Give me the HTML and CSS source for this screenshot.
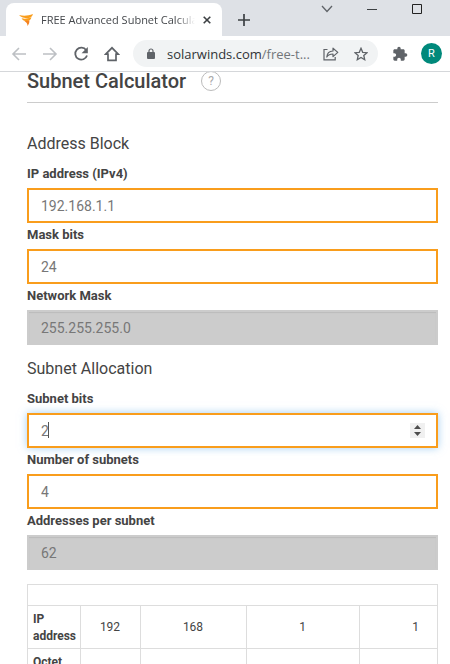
FILE: index.html
```html
<!DOCTYPE html>
<html lang="en">

<head>
  <meta charset="UTF-8">
  <meta name="viewport" content="width=device-width, initial-scale=1.0">
  <title>FREE Advanced Subnet Calculator</title>
  <link rel="stylesheet" href="styles.css">
</head>

<body>

  <header class="browser">
    <div class="tabs">
      <div class="tab">
        <svg class="tab__logo" viewBox="0 0 14 12">
          <path d="M0 1C4 2 9 2 14 0c-.7 2.600-2.600 3.900-5 4.200C6 4.300 2 3.500 0 1z" fill="#f99d1c" />
          <path d="M2.500 4.200c3 .9 6.500.4 10-1-.6 2.300-2 3.500-4.500 3.900-2.200.1-4.500-.9-5.500-2.900z" fill="#f99d1c" />
          <path d="M5.200 6.800c1.600.5 3.400.3 5-.5.5 2-.2 4-1.700 5.700.2-2.200-1.200-3.700-3.300-5.200z" fill="#f58220" />
        </svg>
        <span class="tab__title">FREE Advanced Subnet Calculator</span>
        <button class="tab__close" type="button" aria-label="Close tab">
          <svg width="8" height="8" viewBox="0 0 8 8">
            <path d="M.7.7l6.600 6.600M7.300.7L.7 7.300" stroke="#3c4043" stroke-width="1.600" />
          </svg>
        </button>
      </div>
      <button class="tabs__new" type="button" aria-label="New tab">
        <svg width="12" height="12" viewBox="0 0 12 12">
          <path d="M6 0v12M0 6h12" stroke="#3c4043" stroke-width="1.700" />
        </svg>
      </button>
      <div class="window">
        <button type="button" aria-label="Search tabs">
          <svg width="12" height="12" viewBox="0 0 12 12">
            <path d="M1 3l5 5.500L11 3" fill="none" stroke="#5f6368" stroke-width="1.300" />
          </svg>
        </button>
        <button type="button" aria-label="Minimize">
          <svg width="12" height="12" viewBox="0 0 12 12">
            <path d="M1 6.500h10" stroke="#3c4043" />
          </svg>
        </button>
        <button type="button" aria-label="Maximize">
          <svg width="12" height="12" viewBox="0 0 12 12">
            <path d="M1.500 1.500h9v9h-9z" fill="none" stroke="#222" />
          </svg>
        </button>
      </div>
    </div>

    <nav class="toolbar">
      <button type="button" aria-label="Back">
        <svg width="16" height="16" viewBox="0 0 16 16">
          <path d="M15 8H2M8 2L2 8l6 6" fill="none" stroke="#bdc0c4" stroke-width="1.600" />
        </svg>
      </button>
      <button type="button" aria-label="Forward">
        <svg width="16" height="16" viewBox="0 0 16 16">
          <path d="M1 8h13M8 2l6 6-6 6" fill="none" stroke="#bdc0c4" stroke-width="1.600" />
        </svg>
      </button>
      <button type="button" aria-label="Reload">
        <svg width="16" height="16" viewBox="0 0 16 16">
          <path d="M13.200 4.200A6 6 0 1 0 14 9.500" fill="none" stroke="#5f6368" stroke-width="1.800" />
          <path d="M14.800 1v6.200H8.600z" fill="#5f6368" />
        </svg>
      </button>
      <button type="button" aria-label="Home">
        <svg width="16" height="16" viewBox="0 0 16 16">
          <path d="M1.700 8.200L8 1.800l6.300 6.400H12v6.200H4V8.200z" fill="none" stroke="#5f6368" stroke-width="1.700" />
        </svg>
      </button>
      <div class="address">
        <svg width="8" height="12" viewBox="0 0 8 12">
          <rect y="4" width="8" height="7" rx="1" fill="#5f6368" />
          <path d="M2 4.500V3a2 2 0 0 1 4 0v1.500" fill="none" stroke="#5f6368" stroke-width="1.200" />
        </svg>
        <a class="address__url" href="#">solarwinds.com<span>/free-t...</span></a>
        <button type="button" aria-label="Share">
          <svg width="16" height="14" viewBox="0 0 16 14">
            <path d="M4.500 2.500H1v10.300h11.200V10" fill="none" stroke="#5f6368" stroke-width="1.200" />
            <path d="M3.800 10C4 6.500 6 4.200 10 4V1.200l4.800 4.200L10 9.600V7C7.200 7 5.200 7.800 3.800 10z" fill="none" stroke="#5f6368" stroke-width="1.200" stroke-linejoin="round" />
          </svg>
        </button>
        <button type="button" aria-label="Bookmark">
          <svg width="14" height="14" viewBox="0 0 14 14">
            <path d="M7 1.300l1.700 4 4.300.4-3.200 2.800.9 4.200L7 10.500l-3.700 2.200.9-4.200L1 5.700l4.300-.4z" fill="none" stroke="#5f6368" stroke-width="1.300" />
          </svg>
        </button>
      </div>
      <button type="button" aria-label="Extensions">
        <svg width="16" height="16" viewBox="0 0 24 24">
          <path d="M20.500 11H19V7c0-1.100-.9-2-2-2h-4V3.500a2.500 2.500 0 0 0-5 0V5H4c-1.100 0-2 .9-2 2v3.800h1.500c1.500 0 2.700 1.200 2.700 2.700S5 16.200 3.500 16.200H2V20c0 1.100.9 2 2 2h3.800v-1.500c0-1.500 1.200-2.700 2.700-2.700s2.700 1.200 2.700 2.700V22H17c1.100 0 2-.9 2-2v-4h1.500a2.500 2.500 0 0 0 0-5z" fill="#5f6368" />
        </svg>
      </button>
      <button class="avatar" type="button">R</button>
    </nav>
  </header>

  <main class="page">
    <div class="title">
      <h1>Subnet Calculator</h1>
      <button class="title__help" type="button" aria-label="Help">?</button>
    </div>

    <form class="calculator">
      <h2>Address Block</h2>
      <label for="ip">IP address (IPv4)</label>
      <input id="ip" type="text" value="192.168.1.1">
      <label for="mask-bits">Mask bits</label>
      <input id="mask-bits" type="number" value="24">
      <label for="mask">Network Mask</label>
      <input id="mask" type="text" value="255.255.255.0" disabled>

      <h2>Subnet Allocation</h2>
      <label for="subnet-bits">Subnet bits</label>
      <div class="active-field">
        <input id="subnet-bits" type="number" value="2">
        <span class="active-field__caret"></span>
        <svg class="active-field__spin" viewBox="0 0 15 15">
          <path d="M4 6l3.500-4L11 6zM4 9h7l-3.500 4z" fill="#4d4d4d" />
        </svg>
      </div>
      <label for="subnets">Number of subnets</label>
      <input id="subnets" type="number" value="4">
      <label for="addresses">Addresses per subnet</label>
      <input id="addresses" type="text" value="62" disabled>
    </form>

    <div class="octets">
      <table>
        <colgroup>
          <col class="octets__name">
          <col class="octets__first">
          <col class="octets__second">
          <col class="octets__other">
          <col class="octets__other">
        </colgroup>
        <tr class="octets__blank">
          <td colspan="5"></td>
        </tr>
        <tr>
          <th scope="row">IP address</th>
          <td>192</td>
          <td>168</td>
          <td>1</td>
          <td>1</td>
        </tr>
        <tr>
          <th scope="row">Octet</th>
          <td></td>
          <td></td>
          <td></td>
          <td></td>
        </tr>
      </table>
    </div>
  </main>

</body>
</html>
```

FILE: styles.css
```css
* {
  box-sizing: border-box;
}

body {
  margin: 0;
  height: 100vh;
  display: flex;
  flex-direction: column;
  overflow: hidden;
  background-color: #fff;
  color: #444;
  font-family: Roboto, "Liberation Sans", sans-serif;
}

button {
  display: flex;
  align-items: center;
  justify-content: center;
  padding: 0;
  border: 0;
  background: none;
}

.browser {
  flex: none;
  border-bottom: 1px solid #d5d7da;
  font-family: "Open Sans", "Noto Sans", sans-serif;
}

/* tab strip */
.tabs {
  display: flex;
  height: 36px;
  padding-left: 6px;
  background-color: #dee1e6;
}

.tab {
  display: flex;
  align-items: center;
  width: 216px;
  margin-top: 3px;
  padding: 0 9px 0 13px;
  border-radius: 8px 8px 0 0;
  background-color: #fff;
}

.tab__logo {
  flex: none;
  width: 14px;
  height: 12px;
  margin-right: 8px;
}

.tab__title {
  flex: 1;
  overflow: hidden;
  white-space: nowrap;
  font-size: 11px;
  color: #45484c;
  -webkit-mask-image: linear-gradient(to right, #000 88%, transparent);
  mask-image: linear-gradient(to right, #000 88%, transparent);
}

.tab__close {
  width: 12px;
  height: 12px;
  margin-left: 6px;
}

.tabs__new {
  width: 44px;
  padding-top: 3px;
}

.window {
  display: flex;
  gap: 33px;
  height: 18px;
  margin-left: auto;
  padding-right: 27px;
}

/* toolbar */
.toolbar {
  display: flex;
  align-items: center;
  gap: 15px;
  height: 35px;
  padding: 0 8px 0 11px;
}

.address {
  flex: 1;
  display: flex;
  align-items: center;
  height: 27px;
  margin-right: -1px;
  margin-left: -2px;
  padding: 0 10px 0 14px;
  border-radius: 14px;
  background-color: #f1f3f4;
}

.address__url {
  flex: 1;
  margin-left: 12px;
  white-space: nowrap;
  text-decoration: none;
  font-size: 13px;
  color: #303336;
}

.address__url span {
  color: #72767a;
}

.address button + button {
  margin-left: 15px;
}

.avatar {
  width: 21px;
  height: 21px;
  margin-left: -2px;
  border-radius: 50%;
  background-color: #00897b;
  color: #fff;
  font-family: Roboto, sans-serif;
  font-size: 11px;
}

/* page */
.page {
  flex: 1;
  min-height: 0;
  overflow: hidden;
  padding: 0 12px 0 27px;
}

.title {
  display: flex;
  align-items: center;
  height: 31px;
  padding-bottom: 12px;
  border-bottom: 1px solid #ccc;
}

.title h1 {
  margin: 0;
  font-size: 20px;
  font-weight: 500;
  line-height: 20px;
}

.title__help {
  width: 20px;
  height: 20px;
  margin-left: 15px;
  border: 1px solid #bbb;
  border-radius: 50%;
  color: #aaa;
  font-family: inherit;
  font-size: 12px;
}

.calculator {
  padding-top: 17px;
}

.calculator h2 {
  margin: 12px 0 6px;
  font-size: 16px;
  font-weight: 400;
  line-height: 24px;
}

.calculator label {
  display: block;
  margin-bottom: 2px;
  font-size: 13px;
  font-weight: 700;
  line-height: 24px;
}

.calculator input {
  display: block;
  width: 100%;
  height: 35px;
  margin: 0;
  padding: 0 12px;
  border: 2px solid #f99d1c;
  border-radius: 0;
  outline: 0;
  background-color: #fff;
  color: #777;
  font-family: inherit;
  font-size: 14px;
  appearance: textfield;
}

.calculator input::-webkit-inner-spin-button {
  appearance: none;
}

.calculator input:disabled {
  border-color: #ccc;
  background-color: #ccc;
  box-shadow: inset 0 1px 1px rgba(0, 0, 0, 0.08);
}

.active-field {
  position: relative;
  box-shadow: 0 0 8px rgba(102, 175, 233, 0.6);
}

.active-field__caret {
  position: absolute;
  top: 9px;
  left: 21px;
  width: 1px;
  height: 16px;
  background-color: #555;
}

.active-field__spin {
  position: absolute;
  top: 10px;
  right: 13px;
  width: 15px;
  height: 15px;
  background-color: #f0f0f0;
}

/* octet table, wider than the page */
.octets {
  overflow: hidden;
  margin-top: 14px;
  border: 1px solid #ddd;
}

.octets table {
  width: 444px;
  border-collapse: collapse;
  table-layout: fixed;
}

.octets__name {
  width: 52px;
}

.octets__first {
  width: 60px;
}

.octets__second {
  width: 106px;
}

.octets__other {
  width: 113px;
}

.octets th,
.octets td {
  height: 43px;
  padding: 5px 5px 3px;
  border-right: 1px solid #ddd;
  border-bottom: 1px solid #ddd;
  font-size: 12px;
  line-height: 17px;
  text-align: center;
}

.octets th {
  text-align: left;
  vertical-align: top;
}

.octets .octets__blank td {
  height: 20px;
  padding: 0;
}
```
